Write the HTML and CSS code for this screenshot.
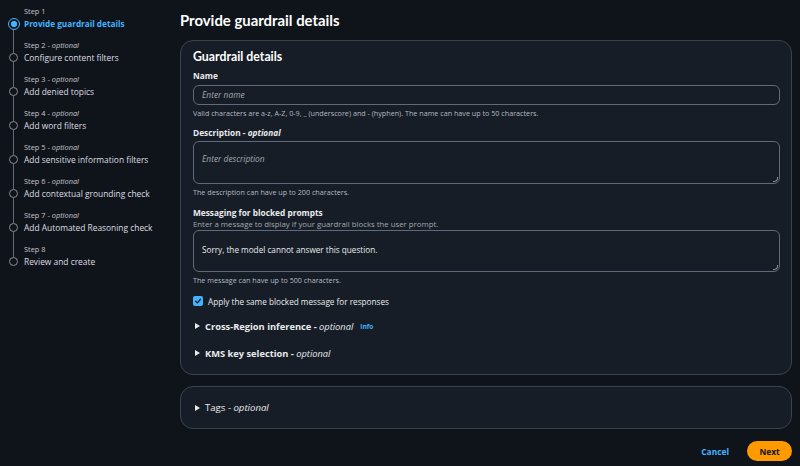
FILE: index.html
```html
<!DOCTYPE html>
<html lang="en">
<head>
<meta charset="utf-8">
<title>Provide guardrail details</title>
<link rel="stylesheet" href="styles.css">
</head>
<body>
<aside class="steps">
  <div class="step current">
    <div class="rail-top none"></div>
    <div class="meta">Step 1</div>
    <div class="node"><span class="stub none"></span><span class="dot"></span><span class="stub"></span></div>
    <div class="label">Provide guardrail details</div>
    <div class="rail-bottom"></div>
  </div>
  <div class="step">
    <div class="rail-top"></div>
    <div class="meta">Step 2 - <i>optional</i></div>
    <div class="node"><span class="stub"></span><span class="dot"></span><span class="stub"></span></div>
    <div class="label">Configure content filters</div>
    <div class="rail-bottom"></div>
  </div>
  <div class="step">
    <div class="rail-top"></div>
    <div class="meta">Step 3 - <i>optional</i></div>
    <div class="node"><span class="stub"></span><span class="dot"></span><span class="stub"></span></div>
    <div class="label">Add denied topics</div>
    <div class="rail-bottom"></div>
  </div>
  <div class="step">
    <div class="rail-top"></div>
    <div class="meta">Step 4 - <i>optional</i></div>
    <div class="node"><span class="stub"></span><span class="dot"></span><span class="stub"></span></div>
    <div class="label">Add word filters</div>
    <div class="rail-bottom"></div>
  </div>
  <div class="step">
    <div class="rail-top"></div>
    <div class="meta">Step 5 - <i>optional</i></div>
    <div class="node"><span class="stub"></span><span class="dot"></span><span class="stub"></span></div>
    <div class="label">Add sensitive information filters</div>
    <div class="rail-bottom"></div>
  </div>
  <div class="step">
    <div class="rail-top"></div>
    <div class="meta">Step 6 - <i>optional</i></div>
    <div class="node"><span class="stub"></span><span class="dot"></span><span class="stub"></span></div>
    <div class="label">Add contextual grounding check</div>
    <div class="rail-bottom"></div>
  </div>
  <div class="step">
    <div class="rail-top"></div>
    <div class="meta">Step 7 - <i>optional</i></div>
    <div class="node"><span class="stub"></span><span class="dot"></span><span class="stub"></span></div>
    <div class="label">Add Automated Reasoning check</div>
    <div class="rail-bottom"></div>
  </div>
  <div class="step">
    <div class="rail-top"></div>
    <div class="meta">Step 8</div>
    <div class="node"><span class="stub"></span><span class="dot"></span><span class="stub none"></span></div>
    <div class="label">Review and create</div>
    <div class="rail-bottom none"></div>
  </div>
</aside>

<main class="main">
  <h1 class="page-title">Provide guardrail details</h1>

  <section class="panel details">
    <h2 class="panel-title">Guardrail details</h2>

    <div class="field f-name">
      <div class="field-label">Name</div>
      <div class="input"><span class="placeholder">Enter name</span></div>
      <div class="hint">Valid characters are a-z, A-Z, 0-9, _ (underscore) and - (hyphen). The name can have up to 50 characters.</div>
    </div>

    <div class="field f-desc">
      <div class="field-label">Description - <i>optional</i></div>
      <div class="textarea"><span class="placeholder">Enter description</span><span class="grip"></span></div>
      <div class="hint">The description can have up to 200 characters.</div>
    </div>

    <div class="field f-msg">
      <div class="field-label">Messaging for blocked prompts</div>
      <div class="field-desc">Enter a message to display if your guardrail blocks the user prompt.</div>
      <div class="textarea tall"><span class="value">Sorry, the model cannot answer this question.</span><span class="grip"></span></div>
      <div class="hint">The message can have up to 500 characters.</div>
    </div>

    <label class="check">
      <span class="box"><svg viewBox="0 0 10 10" width="8" height="8"><path d="M2 5.2 L4.2 7.3 L8 2.8" fill="none" stroke="#0f141a" stroke-width="1.6" stroke-linecap="round" stroke-linejoin="round"/></svg></span>
      <span>Apply the same blocked message for responses</span>
    </label>

    <div class="expander x-region">
      <span class="caret"></span>
      <span class="exp-title">Cross-Region inference - <i>optional</i></span>
      <span class="info">Info</span>
    </div>

    <div class="expander x-kms">
      <span class="caret"></span>
      <span class="exp-title">KMS key selection - <i>optional</i></span>
    </div>
  </section>

  <section class="panel tags">
    <div class="expander">
      <span class="caret"></span>
      <span class="exp-title tags-title">Tags - <i>optional</i></span>
    </div>
  </section>

  <div class="actions">
    <span class="cancel">Cancel</span>
    <span class="next">Next</span>
  </div>
</main>
</body>
</html>
```

FILE: styles.css
```css
* { box-sizing: border-box; }

html, body {
  margin: 0;
  padding: 0;
  background: #0f141a;
  color: #e9ebed;
  font-family: "Open Sans", "Noto Sans", sans-serif;
}

body {
  display: flex;
  width: 800px;
  height: 466px;
  overflow: hidden;
}

/* ---------- steps ---------- */
.steps {
  width: 180px;
  flex: none;
  padding: 5px 0 0 8px;
}

.step {
  display: grid;
  grid-template-columns: 11px 1fr;
  grid-template-rows: 12px 13px 9px;
  column-gap: 5px;
}

.rail-top, .rail-bottom {
  width: 1px;
  justify-self: center;
  background: #5f6b7a;
}
.rail-top { grid-column: 1; grid-row: 1; }
.rail-bottom { grid-column: 1; grid-row: 3; }
.none { background: transparent !important; }

.meta {
  grid-column: 2;
  grid-row: 1;
  font-size: 7.4px;
  line-height: 12px;
  color: #c6c6cd;
}
.meta i { font-style: italic; }

.node {
  grid-column: 1;
  grid-row: 2;
  display: flex;
  flex-direction: column;
  align-items: center;
}
.stub {
  flex: 1;
  width: 1px;
  background: #5f6b7a;
}
.dot {
  flex: none;
  width: 9px;
  height: 9px;
  border-radius: 50%;
  border: 1.3px solid #8c8c94;
}
.current .dot {
  width: 12px;
  height: 12px;
  border: 1.5px solid #42b4ff;
  background: radial-gradient(circle, #42b4ff 0 2.8px, transparent 3.3px);
}

.label {
  grid-column: 2;
  grid-row: 2;
  font-size: 8.4px;
  line-height: 13px;
  color: #dedee3;
  white-space: nowrap;
}
.current .label {
  color: #42b4ff;
  font-weight: 700;
  font-size: 8.2px;
}

/* ---------- main ---------- */
.main {
  flex: 1;
  padding: 0 8px 0 0;
  display: flex;
  flex-direction: column;
}

.page-title {
  margin: 0;
  height: 40px;
  padding-top: 9px;
  font-family: "Lato", "Open Sans", sans-serif;
  font-size: 14.9px;
  line-height: 22px;
  font-weight: 700;
  color: #ffffff;
}

.panel {
  background: #161d26;
  border: 1px solid #3b4350;
  border-radius: 13px;
  padding: 0 11px 0 12px;
}

.details {
  height: 335px;
  padding-top: 7px;
}

.panel-title {
  margin: 0;
  font-family: "Lato", "Open Sans", sans-serif;
  font-size: 12.3px;
  line-height: 18px;
  font-weight: 700;
  color: #ffffff;
}

.field-label {
  font-size: 8.3px;
  line-height: 12px;
  font-weight: 700;
  color: #e9ebed;
}
.field-label i { font-weight: 700; }

.field-desc {
  font-size: 7.8px;
  line-height: 10px;
  color: #a4a8b0;
}

.f-name { margin-top: 4px; }
.f-desc { margin-top: 9px; }
.f-msg { margin-top: 10px; }

.input, .textarea {
  border: 1px solid #5f6b7a;
  border-radius: 6px;
  background: #161d26;
  margin-top: 3px;
  padding: 0 8px;
}
.input {
  height: 20px;
  display: flex;
  align-items: center;
}
.textarea {
  height: 43px;
  margin-top: 2px;
  padding-top: 3px;
  position: relative;
}
.textarea.tall { height: 42px; margin-top: 1px; padding-top: 5px; }

.placeholder {
  font-size: 8.4px;
  font-style: italic;
  color: #a4a8b0;
  line-height: 12px;
}
.value {
  font-size: 8.2px;
  color: #e9ebed;
  line-height: 12px;
}

.grip {
  position: absolute;
  right: 1px;
  bottom: 1px;
  width: 5px;
  height: 5px;
  border-right: 1px solid #8c8c94;
  border-bottom: 1px solid #8c8c94;
  border-bottom-right-radius: 4px;
}

.hint {
  font-size: 7.2px;
  line-height: 10px;
  margin-top: 3px;
  color: #b4b8c0;
}

.check {
  display: flex;
  align-items: center;
  gap: 5px;
  margin-top: 9px;
  height: 14px;
  font-size: 8.2px;
  color: #e9ebed;
}
.box {
  width: 10px;
  height: 10px;
  border-radius: 2px;
  background: #42b4ff;
  display: flex;
  align-items: center;
  justify-content: center;
}

.expander {
  display: flex;
  align-items: center;
  height: 14px;
  gap: 5px;
}
.x-region { margin-top: 11px; }
.x-kms { margin-top: 13px; }

.caret {
  width: 0;
  height: 0;
  border-left: 5px solid #e9ebed;
  border-top: 3.5px solid transparent;
  border-bottom: 3.5px solid transparent;
  margin-left: 2px;
}
.exp-title {
  font-size: 9.3px;
  font-weight: 700;
  color: #e9ebed;
}
.exp-title i { font-weight: 500; }
.info {
  font-size: 6.5px;
  font-weight: 700;
  color: #42b4ff;
  margin-left: 2px;
}

.tags {
  margin-top: 11px;
  height: 43px;
  display: flex;
  align-items: center;
}
.tags-title { font-weight: 500; font-size: 9.6px; }

.actions {
  display: flex;
  justify-content: flex-end;
  align-items: center;
  gap: 18px;
  margin-top: 12px;
  height: 20px;
}
.cancel {
  font-size: 8.4px;
  font-weight: 700;
  color: #42b4ff;
}
.next {
  width: 45px;
  height: 20px;
  border-radius: 10px;
  background: #ff9900;
  color: #0f141a;
  font-size: 8.4px;
  font-weight: 700;
  display: flex;
  align-items: center;
  justify-content: center;
}
```
